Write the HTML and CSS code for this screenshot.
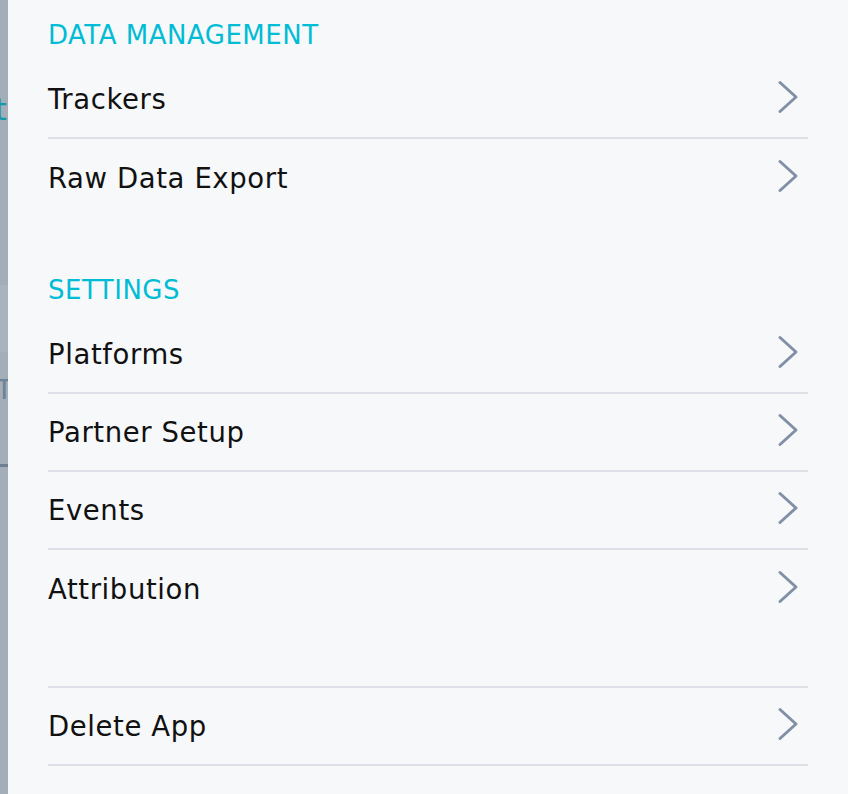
FILE: index.html
```html
<!DOCTYPE html>
<html>
<head>
<meta charset="utf-8">
<link rel="stylesheet" href="styles.css">
</head>
<body>
<div class="page">
  <aside class="backdrop">
    <span class="bd-t">t</span>
    <div class="bd-band"></div>
    <span class="bd-T">T</span>
    <div class="bd-line"></div>
  </aside>
  <main class="panel">
    <section class="group">
      <h2 class="group-title">DATA MANAGEMENT</h2>
      <ul class="list">
        <li class="item"><span>Trackers</span><svg class="chev" viewBox="0 0 22 34"><path d="M3 2.5 L19 17 L3 31.5"/></svg></li>
        <li class="item"><span>Raw Data Export</span><svg class="chev" viewBox="0 0 22 34"><path d="M3 2.5 L19 17 L3 31.5"/></svg></li>
      </ul>
    </section>
    <section class="group">
      <h2 class="group-title">SETTINGS</h2>
      <ul class="list">
        <li class="item"><span>Platforms</span><svg class="chev" viewBox="0 0 22 34"><path d="M3 2.5 L19 17 L3 31.5"/></svg></li>
        <li class="item"><span>Partner Setup</span><svg class="chev" viewBox="0 0 22 34"><path d="M3 2.5 L19 17 L3 31.5"/></svg></li>
        <li class="item"><span>Events</span><svg class="chev" viewBox="0 0 22 34"><path d="M3 2.5 L19 17 L3 31.5"/></svg></li>
        <li class="item"><span>Attribution</span><svg class="chev" viewBox="0 0 22 34"><path d="M3 2.5 L19 17 L3 31.5"/></svg></li>
      </ul>
    </section>
    <ul class="list danger">
      <li class="item"><span>Delete App</span><svg class="chev" viewBox="0 0 22 34"><path d="M3 2.5 L19 17 L3 31.5"/></svg></li>
    </ul>
  </main>
</div>
</body>
</html>
```
FILE: styles.css
```css
* { box-sizing: border-box; }
html, body { margin: 0; padding: 0; }
body {
  width: 848px;
  height: 794px;
  overflow: hidden;
  background: #f7f8fa;
  font-family: "DejaVu Sans", "Noto Sans", sans-serif;
}
.page {
  display: flex;
  height: 794px;
}
.backdrop {
  width: 8px;
  flex: none;
  background: #a3aeb8;
  position: relative;
  overflow: hidden;
}
.bd-t {
  position: absolute;
  left: -5px;
  top: 92px;
  font-size: 30px;
  line-height: 36px;
  color: #1497a8;
}
.bd-band {
  position: absolute;
  left: 0;
  top: 285px;
  width: 8px;
  height: 67px;
  background: #a9b3bd;
}
.bd-T {
  position: absolute;
  left: -4px;
  top: 374px;
  font-size: 27px;
  line-height: 32px;
  color: #6f8397;
}
.bd-line {
  position: absolute;
  left: 0;
  top: 464px;
  width: 8px;
  height: 3px;
  background: #6f7f92;
}
.panel {
  flex: 1;
  padding: 15px 40px 0 40px;
}
.group-title {
  margin: 0 0 6px;
  font-weight: 400;
  font-size: 26px;
  line-height: 40px;
  letter-spacing: 0.5px;
  color: #00bcd4;
}
.list {
  list-style: none;
  margin: 0;
  padding: 0;
}
.group { margin-bottom: 53px; }
.group:last-of-type { margin-bottom: 0; }
.item {
  height: 78px;
  display: flex;
  align-items: center;
  justify-content: space-between;
  font-size: 27.5px;
  letter-spacing: 0.6px;
  color: #111;
  border-bottom: 2px solid #dde1e7;
}
.item:last-child { border-bottom: none; }
.danger { margin-top: 58px; }
.danger .item,
.danger .item:last-child {
  border-top: 2px solid #dde1e7;
  border-bottom: 2px solid #dde1e7;
  height: 80px;
}
.chev {
  width: 22px;
  height: 34px;
  margin-right: 9px;
  margin-bottom: 4px;
  fill: none;
  stroke: #8090a6;
  stroke-width: 3;
  stroke-linecap: round;
  stroke-linejoin: round;
}
```
